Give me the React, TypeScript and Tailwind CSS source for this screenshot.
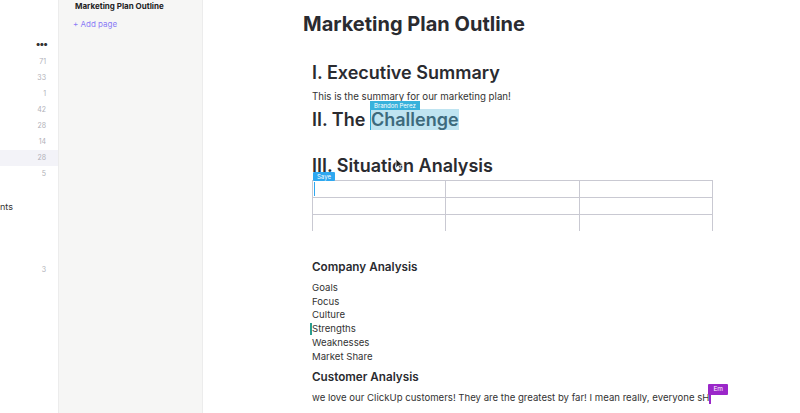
import React from 'react';

const counts = [
  { n: '71' },
  { n: '33' },
  { n: '1' },
  { n: '42' },
  { n: '28' },
  { n: '14' },
  { n: '28', active: true },
  { n: '5' },
];

const companyItems = ['Goals', 'Focus', 'Culture', 'Strengths', 'Weaknesses', 'Market Share'];

function Label({ text, className }: { text: string; className: string }) {
  return (
    <span
      className={`absolute px-[4px] text-[6px] leading-[9px] font-normal text-white whitespace-nowrap ${className}`}
    >
      {text}
    </span>
  );
}

export default function App() {
  return (
    <div className="flex h-[413px] w-[800px] overflow-hidden bg-white text-[#2a2b30] font-['Inter',sans-serif]">
      {/* far left nav */}
      <div className="w-[59px] shrink-0 bg-white border-r border-[#ececec] flex flex-col">
        <div className="mt-[38px] pr-[11px] text-right text-[#333] text-[10px] leading-[10px] font-bold tracking-[-1px]">
          •••
        </div>
        <div className="mt-[6px] flex flex-col">
          {counts.map((c, i) => (
            <div
              key={i}
              className={`h-[16px] pr-[12px] text-right text-[7px] leading-[16px] text-[#b0b0b8] ${
                c.active ? 'bg-[#f3f3f8]' : ''
              }`}
            >
              {c.n}
            </div>
          ))}
        </div>
        <div className="mt-[19px] text-[9px] leading-[12px] text-[#333]">nts</div>
        <div className="mt-[52px] pr-[12px] text-right text-[7px] text-[#b0b0b8]">3</div>
      </div>

      {/* pages column */}
      <div className="w-[144px] shrink-0 bg-[#f6f6f5] border-r border-[#ececec] pl-[16px] pt-[1px]">
        <div className="text-[8px] leading-[10px] font-bold text-[#222]">Marketing Plan Outline</div>
        <div className="mt-[8px] -ml-[2px] text-[8px] leading-[10px] text-[#8b7cf6]">+ Add page</div>
      </div>

      {/* document */}
      <div className="flex-1 pl-[100px] pr-[60px]">
        <h1 className="mt-[11px] text-[20px] leading-[26px] font-bold text-[#2a2b30]">
          Marketing Plan Outline
        </h1>

        <div className="pl-[9px]">
          <h2 className="mt-[25px] text-[18px] leading-[22px] font-semibold text-[#2a2b30]">
            I. Executive Summary
          </h2>
          <p className="mt-[7px] text-[9.7px] leading-[12px] text-[#333]">
            This is the summary for our marketing plan!
          </p>
          <h2 className="mt-[6px] text-[18px] leading-[22px] font-semibold text-[#2a2b30]">
            II. The{' '}
            <span className="relative bg-[#bfe4f1] text-[#3d6a7c] border-l border-[#2aa7d6]">
              <Label text="Brandon Perez" className="-top-[8px] -left-[1px] bg-[#38b2dc]" />
              Challenge
            </span>
          </h2>

          <h2 className="relative mt-[24px] text-[18px] leading-[22px] font-semibold text-[#2a2b30]">
            III. Situation Analysis
            <svg
              className="absolute left-[83px] top-[3px]"
              width="9"
              height="12"
              viewBox="0 0 9 12"
            >
              <path d="M1 1 L1 10 L3.3 7.8 L5 11 L6.3 10.4 L4.7 7.3 L8 7.3 Z" fill="#222" stroke="#fff" strokeWidth="0.8" />
            </svg>
          </h2>

          <div className="relative mt-[3px] w-[401px]">
            <Label text="Saye" className="-top-[8px] left-[1px] bg-[#2ea8f0] rounded-[1px]" />
            <div className="grid grid-cols-3 border-t border-l border-[#c9c9d2]">
              {Array.from({ length: 9 }).map((_, i) => (
                <div
                  key={i}
                  className={`border-r border-[#c9c9d2] ${
                    i >= 6 ? 'h-[16px]' : 'h-[17px] border-b'
                  }`}
                >
                  {i === 0 && <div className="ml-[1px] mt-[1px] h-[14px] w-[1px] bg-[#2ea8f0]" />}
                </div>
              ))}
            </div>
          </div>

          <h3 className="mt-[28px] text-[11.7px] leading-[16px] font-semibold text-[#2a2b30]">
            Company Analysis
          </h3>
          <ul className="mt-[6px]">
            {companyItems.map((t) => (
              <li key={t} className="relative text-[9.6px] leading-[13.7px] text-[#333]">
                {t === 'Strengths' && (
                  <span className="absolute -left-[2px] top-[1px] h-[12px] w-[2px] bg-[#2a9d8f]" />
                )}
                {t}
              </li>
            ))}
          </ul>

          <h3 className="mt-[6px] text-[11.7px] leading-[16px] font-semibold text-[#2a2b30]">
            Customer Analysis
          </h3>
          <p className="relative mt-[7px] text-[9.6px] leading-[12px] text-[#333] whitespace-nowrap">
            we love our ClickUp customers! They are the greatest by far! I mean really, everyone sH
            <span className="relative inline-block h-[11px] w-[2px] align-middle bg-[#9b27c9]">
              <span className="absolute -top-[9px] -left-[1px] px-[5px] text-[6.5px] leading-[11px] text-white bg-[#9b27c9] rounded-[1px]">
                Em
              </span>
            </span>
          </p>
        </div>
      </div>
    </div>
  );
}
